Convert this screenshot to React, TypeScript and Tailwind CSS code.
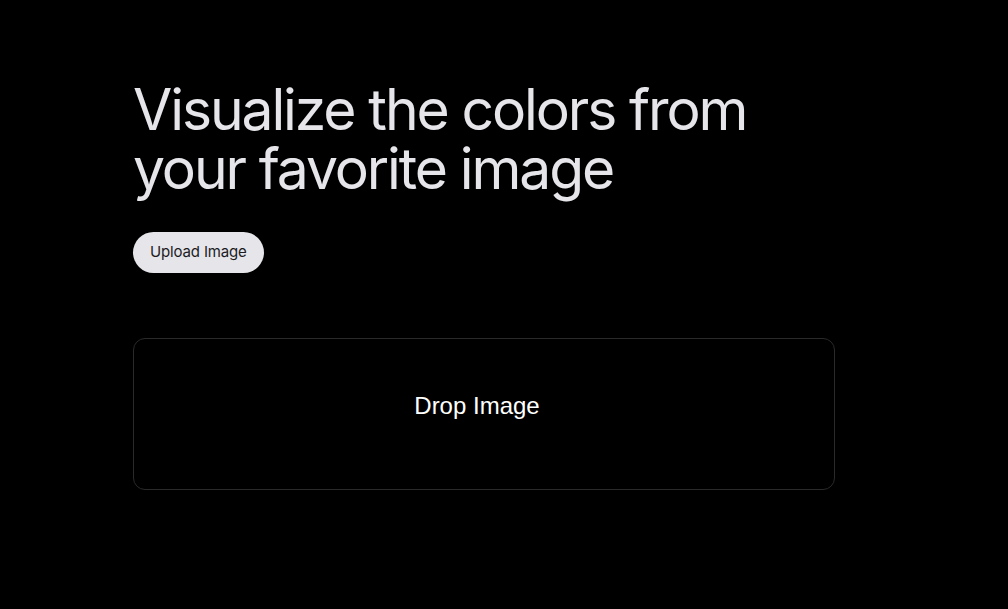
export default function App() {
  return (
    <div className="min-h-screen bg-black font-['Inter',sans-serif]">
      <div className="w-[702px] ml-[133px] pt-[80px]">
        <h1 className="text-[57px] leading-[59px] tracking-[-0.037em] text-[#e5e5ea] font-normal">
          Visualize the colors from
          <br />
          your favorite image
        </h1>
        <button className="mt-[34px] h-[41px] px-[17px] rounded-full bg-[#e5e5ea] text-[#1c1c1e] text-[15px] tracking-[-0.01em]">
          Upload Image
        </button>
        <div className="mt-[65px] h-[152px] rounded-[12px] border border-[#2a2a2c] flex items-center justify-center pb-[16px]">
          <span className="font-['Liberation_Sans',Arial,sans-serif] text-[24px] text-white pr-[14px]">
            Drop Image
          </span>
        </div>
      </div>
    </div>
  )
}
